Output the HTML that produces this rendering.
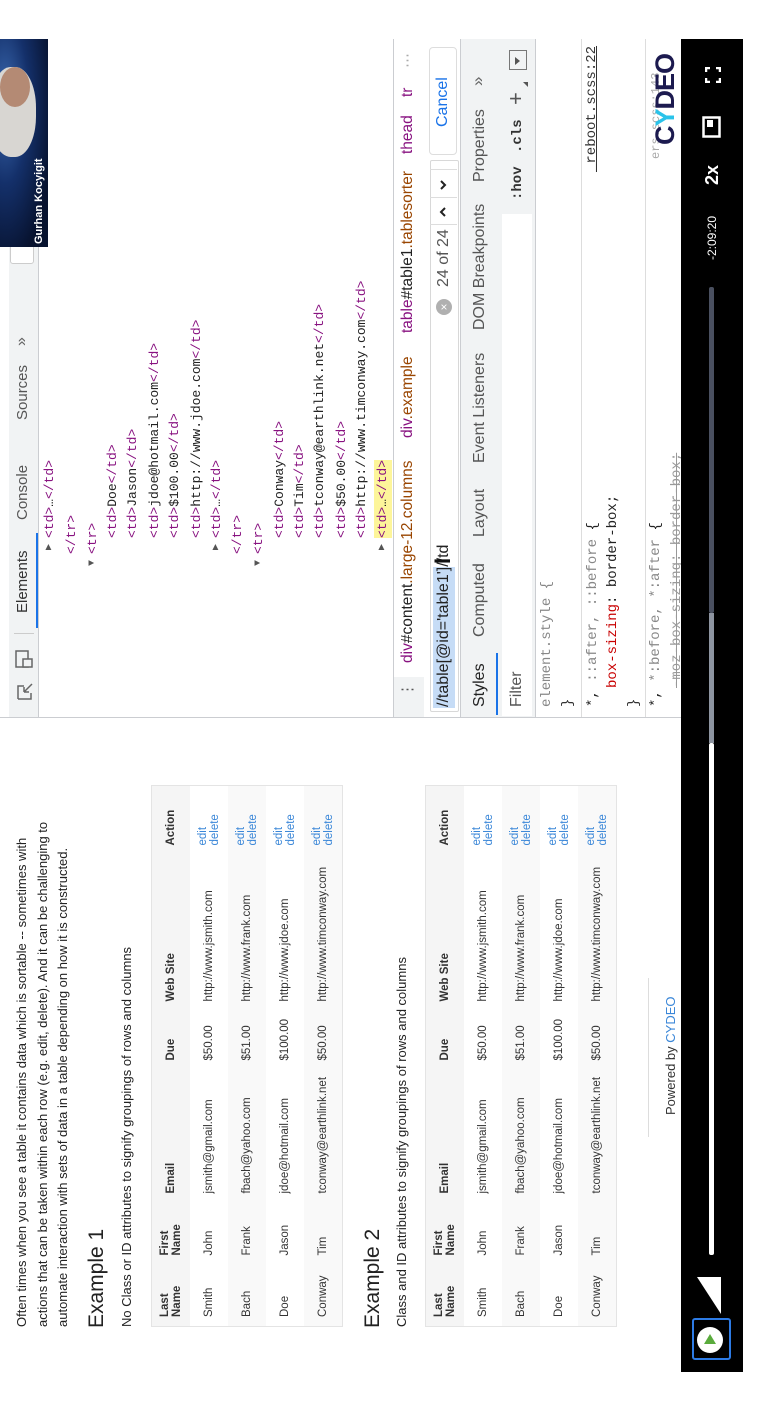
<!DOCTYPE html>
<html><head><meta charset="utf-8">
<style>
html,body{margin:0;padding:0;background:#fff;}
body{width:764px;height:1424px;overflow:hidden;position:relative;}
#L{position:absolute;left:0;top:0;width:1424px;height:764px;transform-origin:0 0;transform:translate(0,1424px) rotate(-90deg);background:#fff;font-family:"Liberation Sans",Arial,sans-serif;color:#222;overflow:hidden;}
.a{position:absolute;white-space:nowrap;}
.m{font-family:"Liberation Mono","DejaVu Sans Mono",monospace;}
.tg{color:#881280;}
.tb{color:#a2709d;}
table.t{position:absolute;border-collapse:collapse;table-layout:fixed;width:541px;font-size:11.5px;color:#333;border:1px solid #e4e4e4;}
table.t td,table.t th{padding:0 0 0 9px;text-align:left;vertical-align:middle;line-height:12px;}
table.t th{font-weight:bold;height:38px;background:#f5f5f5;}
table.t td{height:38px;}
table.t tr.g td{background:#f9f9f9;}
table.t a{color:#3b87d8;text-decoration:none;}
</style></head><body>
<div id="L">

<!-- ============ WEBPAGE ============ -->
<div class="a" style="left:97px;top:12px;font-size:13px;line-height:20.5px;color:#222;">Often times when you see a table it contains data which is sortable -- sometimes with<br>actions that can be taken within each row (e.g. edit, delete). And it can be challenging to<br>automate interaction with sets of data in a table depending on how it is constructed.</div>
<div class="a" style="left:96px;top:84px;font-size:21px;line-height:26px;color:#222;">Example 1</div>
<div class="a" style="left:97px;top:118px;font-size:13px;line-height:18px;">No Class or ID attributes to signify groupings of rows and columns</div>

<table class="t" style="left:97px;top:151px;">
<colgroup><col style="width:62px"><col style="width:62px"><col style="width:133px"><col style="width:59px"><col style="width:156px"><col style="width:69px"></colgroup>
<tr><th>Last<br>Name</th><th>First<br>Name</th><th>Email</th><th>Due</th><th>Web Site</th><th>Action</th></tr>
<tr><td>Smith</td><td>John</td><td>jsmith@gmail.com</td><td>$50.00</td><td>http://www.jsmith.com</td><td><a>edit</a><br><a>delete</a></td></tr>
<tr class="g"><td>Bach</td><td>Frank</td><td>fbach@yahoo.com</td><td>$51.00</td><td>http://www.frank.com</td><td><a>edit</a><br><a>delete</a></td></tr>
<tr><td>Doe</td><td>Jason</td><td>jdoe@hotmail.com</td><td>$100.00</td><td>http://www.jdoe.com</td><td><a>edit</a><br><a>delete</a></td></tr>
<tr class="g"><td>Conway</td><td>Tim</td><td>tconway@earthlink.net</td><td>$50.00</td><td>http://www.timconway.com</td><td><a>edit</a><br><a>delete</a></td></tr>
</table>

<div class="a" style="left:96px;top:360px;font-size:21px;line-height:26px;color:#222;">Example 2</div>
<div class="a" style="left:97px;top:393px;font-size:13px;line-height:18px;">Class and ID attributes to signify groupings of rows and columns</div>

<table class="t" style="left:97px;top:425px;">
<colgroup><col style="width:62px"><col style="width:62px"><col style="width:133px"><col style="width:59px"><col style="width:156px"><col style="width:69px"></colgroup>
<tr><th>Last<br>Name</th><th>First<br>Name</th><th>Email</th><th>Due</th><th>Web Site</th><th>Action</th></tr>
<tr><td>Smith</td><td>John</td><td>jsmith@gmail.com</td><td>$50.00</td><td>http://www.jsmith.com</td><td><a>edit</a><br><a>delete</a></td></tr>
<tr class="g"><td>Bach</td><td>Frank</td><td>fbach@yahoo.com</td><td>$51.00</td><td>http://www.frank.com</td><td><a>edit</a><br><a>delete</a></td></tr>
<tr><td>Doe</td><td>Jason</td><td>jdoe@hotmail.com</td><td>$100.00</td><td>http://www.jdoe.com</td><td><a>edit</a><br><a>delete</a></td></tr>
<tr class="g"><td>Conway</td><td>Tim</td><td>tconway@earthlink.net</td><td>$50.00</td><td>http://www.timconway.com</td><td><a>edit</a><br><a>delete</a></td></tr>
</table>

<div class="a" style="left:287px;top:648px;width:159px;height:1px;background:#ddd;"></div>
<div class="a" style="left:309px;top:662px;font-size:13px;line-height:18px;color:#333;">Powered by <span style="color:#3b87d8">CYDEO</span></div>

<!-- ============ DEVTOOLS ============ -->
<div class="a" style="left:706px;top:0;width:1px;height:681px;background:#cbcdd1;"></div>
<!-- header -->
<div class="a" style="left:707px;top:9px;width:678px;height:29px;background:#f1f3f4;border-bottom:1px solid #cbcdd1;"></div>
<svg class="a" style="left:722px;top:14px" width="20" height="20" viewBox="0 0 20 20"><path d="M3 4h13v6M3 4v13h6" fill="none" stroke="#666" stroke-width="1.5"/><path d="M10 10l8 8M10 10h5M10 10v5" fill="none" stroke="#666" stroke-width="1.5"/></svg>
<svg class="a" style="left:754px;top:13px" width="22" height="22" viewBox="0 0 22 22"><rect x="3" y="3" width="16" height="12" fill="none" stroke="#666" stroke-width="1.5"/><rect x="3" y="10" width="8" height="9" fill="#f1f3f4" stroke="#666" stroke-width="1.5"/></svg>
<div class="a" style="left:790px;top:14px;width:1px;height:20px;background:#ccc;"></div>
<div class="a" style="left:811px;top:13px;font-size:15px;line-height:20px;color:#333;">Elements</div>
<div class="a" style="left:796px;top:36px;width:95px;height:2px;background:#1a73e8;"></div>
<div class="a" style="left:904px;top:13px;font-size:15px;line-height:20px;color:#555;">Console</div>
<div class="a" style="left:1004px;top:13px;font-size:15px;line-height:20px;color:#555;">Sources</div>
<div class="a" style="left:1078px;top:12px;font-size:16px;line-height:20px;color:#666;">»</div>
<div class="a" style="left:1160px;top:10px;width:20px;height:22px;background:#fff;border:1px solid #ccc;border-radius:3px;"></div>

<!-- elements code -->
<div class="m" style="position:absolute;left:0;top:0;font-size:13px;">
<div class="a" style="left:874px;top:41px;color:#555;font-size:10px;line-height:18px;">▶</div><div class="a" style="left:886px;top:41px;line-height:18px;"><span class="tg">&lt;td&gt;</span>…<span class="tg">&lt;/td&gt;</span></div>
<div class="a" style="left:870px;top:63px;line-height:18px;"><span class="tg">&lt;/tr&gt;</span></div>
<div class="a" style="left:858px;top:84px;color:#555;font-size:10px;line-height:18px;">▼</div><div class="a" style="left:870px;top:84px;line-height:18px;"><span class="tg">&lt;tr&gt;</span></div>
<div class="a" style="left:886px;top:104px;line-height:18px;"><span class="tg">&lt;td&gt;</span>Doe<span class="tg">&lt;/td&gt;</span></div>
<div class="a" style="left:886px;top:124px;line-height:18px;"><span class="tg">&lt;td&gt;</span>Jason<span class="tg">&lt;/td&gt;</span></div>
<div class="a" style="left:886px;top:146px;line-height:18px;"><span class="tg">&lt;td&gt;</span>jdoe@hotmail.com<span class="tg">&lt;/td&gt;</span></div>
<div class="a" style="left:886px;top:166px;line-height:18px;"><span class="tg">&lt;td&gt;</span>$100.00<span class="tg">&lt;/td&gt;</span></div>
<div class="a" style="left:886px;top:188px;line-height:18px;"><span class="tg">&lt;td&gt;</span>http://www.jdoe.com<span class="tg">&lt;/td&gt;</span></div>
<div class="a" style="left:874px;top:208px;color:#555;font-size:10px;line-height:18px;">▶</div><div class="a" style="left:886px;top:208px;line-height:18px;"><span class="tg">&lt;td&gt;</span>…<span class="tg">&lt;/td&gt;</span></div>
<div class="a" style="left:870px;top:229px;line-height:18px;"><span class="tg">&lt;/tr&gt;</span></div>
<div class="a" style="left:858px;top:250px;color:#555;font-size:10px;line-height:18px;">▼</div><div class="a" style="left:870px;top:250px;line-height:18px;"><span class="tg">&lt;tr&gt;</span></div>
<div class="a" style="left:886px;top:271px;line-height:18px;"><span class="tg">&lt;td&gt;</span>Conway<span class="tg">&lt;/td&gt;</span></div>
<div class="a" style="left:886px;top:291px;line-height:18px;"><span class="tg">&lt;td&gt;</span>Tim<span class="tg">&lt;/td&gt;</span></div>
<div class="a" style="left:886px;top:311px;line-height:18px;"><span class="tg">&lt;td&gt;</span>tconway@earthlink.net<span class="tg">&lt;/td&gt;</span></div>
<div class="a" style="left:886px;top:333px;line-height:18px;"><span class="tg">&lt;td&gt;</span>$50.00<span class="tg">&lt;/td&gt;</span></div>
<div class="a" style="left:886px;top:353px;line-height:18px;"><span class="tg">&lt;td&gt;</span>http://www.timconway.com<span class="tg">&lt;/td&gt;</span></div>
<div class="a" style="left:874px;top:374px;color:#555;font-size:10px;line-height:18px;">▶</div><div class="a" style="left:886px;top:374px;line-height:18px;background:#fdf59a;"><span class="tg">&lt;td&gt;</span>…<span class="tg">&lt;/td&gt;</span></div>
</div>

<!-- breadcrumb -->
<div class="a" style="left:707px;top:393px;width:678px;height:30px;background:#fff;border-top:1px solid #cbcdd1;border-bottom:1px solid #cbcdd1;"></div>
<div class="a" style="left:707px;top:394px;width:40px;height:30px;background:#f1f3f4;"></div>
<div class="a" style="left:727px;top:398px;font-size:15px;line-height:20px;color:#555;">⋮</div>
<div class="a" style="left:761px;top:398px;font-size:15.5px;line-height:20px;color:#222;"><span style="color:#881280">div</span>#content<span style="color:#994500">.large-12.columns</span></div>
<div class="a" style="left:986px;top:398px;font-size:15.5px;line-height:20px;color:#222;"><span style="color:#881280">div</span><span style="color:#994500">.example</span></div>
<div class="a" style="left:1091px;top:398px;font-size:15.5px;line-height:20px;color:#222;"><span style="color:#881280">table</span>#table1<span style="color:#994500">.tablesorter</span></div>
<div class="a" style="left:1270px;top:398px;font-size:15.5px;line-height:20px;color:#881280;">thead</div>
<div class="a" style="left:1327px;top:398px;font-size:15.5px;line-height:20px;color:#881280;">tr</div>
<div class="a" style="left:1356px;top:398px;font-size:15px;line-height:20px;color:#aaa;">⋯</div>

<!-- search -->
<div class="a" style="left:707px;top:424px;width:678px;height:36px;background:#fff;"></div>
<div class="a" style="left:712px;top:430px;width:550px;height:27px;border:1px solid #d8d8d8;border-radius:2px;"></div>
<div class="a" style="left:716px;top:433px;width:141px;height:22px;background:#c6dcf6;"></div>
<div class="a" style="left:717px;top:433px;font-size:16px;line-height:22px;color:#222;">//table[@id='table1']//td</div>
<div class="a" style="left:860px;top:429px;font-size:22px;line-height:28px;font-weight:bold;color:#111;">I</div>
<div class="a" style="left:1109px;top:436px;width:16px;height:16px;border-radius:50%;background:#b0b0b0;color:#fff;font-size:12px;line-height:16px;text-align:center;">×</div>
<div class="a" style="left:1137px;top:433px;font-size:16px;line-height:22px;color:#555;">24 of 24</div>
<div class="a" style="left:1199px;top:430px;width:27px;height:27px;border-left:1px solid #ddd;"></div>
<div class="a" style="left:1226px;top:430px;width:27px;height:27px;border-left:1px solid #ddd;border-right:1px solid #ddd;"></div>
<svg class="a" style="left:1205px;top:436px" width="14" height="14" viewBox="0 0 14 14"><path d="M3 9l4-4 4 4" fill="none" stroke="#222" stroke-width="2"/></svg>
<svg class="a" style="left:1232px;top:436px" width="14" height="14" viewBox="0 0 14 14"><path d="M3 5l4 4 4-4" fill="none" stroke="#222" stroke-width="2"/></svg>
<div class="a" style="left:1269px;top:429px;width:106px;height:26px;border:1px solid #ddd;border-radius:4px;background:#fff;"></div>
<div class="a" style="left:1297px;top:432px;font-size:16px;line-height:22px;color:#1a73e8;">Cancel</div>

<!-- tabs -->
<div class="a" style="left:707px;top:460px;width:678px;height:38px;background:#f1f3f4;border-top:1px solid #cbcdd1;border-bottom:1px solid #cbcdd1;"></div>
<div class="a" style="left:717px;top:470px;font-size:16px;line-height:20px;color:#222;">Styles</div>
<div class="a" style="left:709px;top:496px;width:62px;height:2px;background:#1a73e8;"></div>
<div class="a" style="left:787px;top:470px;font-size:16px;line-height:20px;color:#555;">Computed</div>
<div class="a" style="left:887px;top:470px;font-size:16px;line-height:20px;color:#555;">Layout</div>
<div class="a" style="left:961px;top:470px;font-size:16px;line-height:20px;color:#555;">Event Listeners</div>
<div class="a" style="left:1094px;top:470px;font-size:16px;line-height:20px;color:#555;">DOM Breakpoints</div>
<div class="a" style="left:1242px;top:470px;font-size:16px;line-height:20px;color:#555;">Properties</div>
<div class="a" style="left:1338px;top:468px;font-size:17px;line-height:20px;color:#666;">»</div>

<!-- filter -->
<div class="a" style="left:707px;top:499px;width:678px;height:36px;background:#f1f3f4;border-bottom:1px solid #cbcdd1;"></div>
<div class="a" style="left:708px;top:502px;width:502px;height:30px;background:#fff;"></div>
<div class="a" style="left:717px;top:507px;font-size:16px;line-height:20px;color:#555;">Filter</div>
<div class="a m" style="left:1224px;top:508px;font-size:14px;line-height:20px;color:#333;font-weight:bold;">:hov</div>
<div class="a m" style="left:1271px;top:508px;font-size:14px;line-height:20px;color:#333;font-weight:bold;">.cls</div>
<div class="a" style="left:1319px;top:503px;font-size:22px;line-height:26px;color:#555;">+</div>
<div class="a" style="left:1337px;top:523px;width:0;height:0;border-left:5px solid transparent;border-bottom:5px solid #555;"></div>
<div class="a" style="left:1354px;top:509px;width:18px;height:16px;border:1px solid #777;"></div>
<div class="a" style="left:1359px;top:515px;width:0;height:0;border-left:4px solid transparent;border-right:4px solid transparent;border-top:5px solid #555;"></div>

<!-- styles pane -->
<div class="m" style="position:absolute;left:0;top:0;font-size:14px;">
<div class="a" style="left:717px;top:537px;line-height:20px;color:#888;">element.style {</div>
<div class="a" style="left:717px;top:558px;line-height:20px;color:#333;">}</div>
<div class="a" style="left:707px;top:581px;width:678px;height:1px;background:#ddd;"></div>
<div class="a" style="left:717px;top:583px;line-height:20px;color:#222;">*, <span style="color:#888">::after, ::before</span> {</div>
<div class="a" style="left:736px;top:603px;line-height:20px;color:#222;"><span style="color:#c80000">box-sizing</span>: border-box;</div>
<div class="a" style="left:717px;top:624px;line-height:20px;color:#333;">}</div>
<div class="a" style="left:1252px;top:582px;line-height:20px;color:#333;text-decoration:underline;">_reboot.scss:22</div>
<div class="a" style="left:707px;top:645px;width:678px;height:1px;background:#ddd;"></div>
<div class="a" style="left:717px;top:646px;line-height:20px;color:#222;">*, <span style="color:#888">*:before, *:after</span> {</div>
<div class="a" style="left:736px;top:667px;line-height:20px;color:#999;text-decoration:line-through;">-moz-box-sizing: border-box;</div>
<div class="a" style="left:1265px;top:646px;line-height:20px;color:#aaa;font-size:12px;">ers.scss:143</div>
</div>

<!-- CYDEO watermark logo -->
<div class="a" style="left:1279px;top:651px;font-size:27px;line-height:28px;font-weight:900;color:#1c1a4f;letter-spacing:-1px;">C<span style="color:#2ac3ea">Y</span>DEO</div>

<!-- webcam -->
<div class="a" style="left:1177px;top:0;width:208px;height:48px;background:radial-gradient(ellipse at 70% 10%,#3d6db5 0%,#14306a 40%,#07122e 80%);overflow:hidden;">
  <div style="position:absolute;left:90px;top:-10px;width:90px;height:46px;border-radius:45%;background:#d8d6d2;"></div>
  <div style="position:absolute;left:140px;top:0;width:40px;height:30px;border-radius:50%;background:#b48a74;"></div>
  <div style="position:absolute;left:3px;top:33px;font-size:11px;line-height:13px;font-weight:bold;color:#fff;">Gurhan Kocyigit</div>
</div>

<!-- ============ VIDEO CONTROL BAR ============ -->
<div class="a" style="left:52px;top:681px;width:1333px;height:62px;background:#000;"></div>
<div class="a" style="left:64px;top:692px;width:38px;height:35px;border:2px solid #2d7be5;border-radius:3px;"></div>
<div class="a" style="left:71px;top:697px;width:26px;height:26px;border-radius:50%;background:#fff;"></div>
<div class="a" style="left:80px;top:704px;width:0;height:0;border-top:6px solid transparent;border-bottom:6px solid transparent;border-left:10px solid #5aab3d;"></div>
<svg class="a" style="left:110px;top:696px" width="38" height="26" viewBox="0 0 38 26"><path d="M37 1V25H0Z" fill="#fff"/></svg>
<div class="a" style="left:169px;top:709px;width:512px;height:5px;background:#fff;border-radius:2px;"></div>
<div class="a" style="left:681px;top:709px;width:130px;height:5px;background:#8d94a0;"></div>
<div class="a" style="left:811px;top:709px;width:326px;height:5px;background:#4a5060;border-radius:2px;"></div>
<div class="a" style="left:1164px;top:704px;font-size:12px;line-height:16px;color:#fff;">-2:09:20</div>
<div class="a" style="left:1239px;top:701px;font-size:18px;line-height:22px;font-weight:bold;color:#fff;">2x</div>
<svg class="a" style="left:1286px;top:702px" width="22" height="20" viewBox="0 0 22 20"><rect x="1.5" y="1.5" width="19" height="16" fill="none" stroke="#fff" stroke-width="2.5"/><rect x="11" y="5" width="7" height="6" fill="#fff"/></svg>
<svg class="a" style="left:1341px;top:705px" width="16" height="16" viewBox="0 0 16 16"><path d="M1 5V1h4M11 1h4v4M15 11v4h-4M5 15H1v-4" fill="none" stroke="#fff" stroke-width="2.5"/></svg>

</div>
</body></html>
